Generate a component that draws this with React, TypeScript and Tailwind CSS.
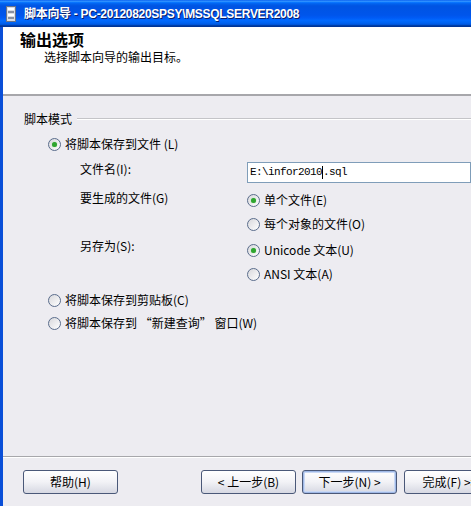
import React from 'react';

const cjk = "font-['SimSun','Noto_Sans_CJK_SC',sans-serif]";

function Radio({ checked }: { checked?: boolean }) {
    return (
        <span className="relative inline-flex w-[13px] h-[13px] shrink-0 rounded-full border border-[#5a6c8c] bg-gradient-to-br from-[#d8d8dc] to-[#ffffff] items-center justify-center">
            {checked && <span className="w-[5px] h-[5px] rounded-full bg-[#2fa52f] shadow-[0_0_1px_#7ad07a]" />}
        </span>
    );
}

function RadioRow({ checked, children }: { checked?: boolean; children: React.ReactNode }) {
    return (
        <div className="flex items-center h-[20px] gap-[4px]">
            <Radio checked={checked} />
            <span className="text-[12px] leading-[14px] text-black whitespace-nowrap">{children}</span>
        </div>
    );
}

function XpButton({ children, isDefault, className }: { children: React.ReactNode; isDefault?: boolean; className?: string }) {
    return (
        <button
            className={`h-[24px] w-[95px] shrink-0 rounded-[3px] border border-[#4a5878] bg-gradient-to-b from-[#ffffff] via-[#f2f2f6] to-[#d6d8e2] text-[12px] text-black whitespace-nowrap ${
                isDefault ? 'shadow-[inset_0_0_0_1px_#9fb8e6,inset_0_0_0_2px_#c9d8f4]' : ''
            } ${className ?? ''}`}
        >
            {children}
        </button>
    );
}

export default function App() {
    return (
        <div className={`w-[471px] h-[506px] overflow-hidden flex flex-col bg-[#edecf1] ${cjk}`}>
            {/* title bar */}
            <div
                className="h-[27px] shrink-0 flex items-center pl-[6px] gap-[8px]"
                style={{
                    background:
                        'linear-gradient(to bottom, #0058EE 0%, #3593FF 4%, #288EFF 6%, #127DFF 8%, #036FFC 10%, #0262EE 14%, #0057E5 20%, #0054E3 24%, #0055EB 56%, #005BF5 66%, #026AFE 76%, #0062EF 86%, #0052D6 92%, #0040AB 94%, #003092 100%)',
                }}
            >
                <svg width="10" height="16" viewBox="0 0 10 16">
                    <rect x="0.5" y="0.5" width="9" height="15" fill="#d8dce4" stroke="#6a7488" />
                    <rect x="2" y="2" width="6" height="2" fill="#ffffff" />
                    <rect x="2" y="5" width="6" height="2" fill="#8890a0" />
                    <rect x="2" y="8" width="6" height="2" fill="#ffffff" />
                    <rect x="2" y="11" width="6" height="2" fill="#8890a0" />
                </svg>
                <span className="text-white font-bold text-[12px] tracking-[-0.3px] font-['Liberation_Sans','Noto_Sans_CJK_SC',sans-serif] [text-shadow:1px_1px_0_#0a1e6a] whitespace-nowrap">
                    脚本向导 - PC-20120820SPSY\MSSQLSERVER2008
                </span>
            </div>

            <div className="flex-1 flex flex-col border-l-[3px] border-[#0a4fd8]">
                {/* header */}
                <div className="h-[69px] shrink-0 bg-white pl-[17px] pt-[5px] border-b-2 border-[#a7a7ab]">
                    <div className="text-[16px] leading-[15px] font-bold text-black">输出选项</div>
                    <div className="text-[12px] leading-[13px] text-black pl-[24px] mt-[3px]">选择脚本向导的输出目标。</div>
                </div>

                {/* body */}
                <div className="flex-1 flex flex-col text-black">
                    <div className="flex items-center h-[16px] mt-[15px] pl-[21px]">
                        <span className="text-[12px] leading-[14px] whitespace-nowrap">脚本模式</span>
                        <div className="flex-1 ml-[5px] border-t border-b border-t-[#c4c4c8] border-b-white" />
                    </div>

                    <div className="mt-[7px] pl-[45px]">
                        <RadioRow checked>将脚本保存到文件 (L)</RadioRow>
                    </div>

                    <div className="pl-[77px] flex flex-col">
                        <div className="flex mt-[8px]">
                            <span className="w-[167px] shrink-0 text-[12px] leading-[14px]">文件名(I):</span>
                            <div className="flex-1 h-[21px] border border-[#7f9db9] bg-white flex items-center pl-[2px] font-['Liberation_Mono',monospace] text-[11px] tracking-[-0.6px] whitespace-nowrap">
                                E:\infor2010
                                <span className="inline-block w-px h-[13px] bg-black" />
                                .sql
                            </div>
                        </div>

                        <div className="flex mt-[7px]">
                            <span className="w-[167px] shrink-0 text-[12px] leading-[16px]">要生成的文件(G)</span>
                            <div className="flex flex-col gap-[4px]">
                                <RadioRow checked>单个文件(E)</RadioRow>
                                <RadioRow>每个对象的文件(O)</RadioRow>
                            </div>
                        </div>

                        <div className="flex mt-[6px]">
                            <span className="w-[167px] shrink-0 text-[12px] leading-[12px]">另存为(S):</span>
                            <div className="flex flex-col gap-[4px]">
                                <RadioRow checked>Unicode 文本(U)</RadioRow>
                                <RadioRow>ANSI 文本(A)</RadioRow>
                            </div>
                        </div>
                    </div>

                    <div className="mt-[6px] pl-[45px] flex flex-col gap-[3px]">
                        <RadioRow>将脚本保存到剪贴板(C)</RadioRow>
                        <RadioRow>将脚本保存到 “新建查询” 窗口(W)</RadioRow>
                    </div>
                </div>

                {/* footer */}
                <div className="h-[50px] shrink-0 border-t border-[#a7a7ab] flex flex-col">
                    <div className="h-px bg-white" />
                    <div className="flex items-center mt-[12px] pl-[20px]">
                        <XpButton>帮助(H)</XpButton>
                        <XpButton className="ml-[83px]">&lt; 上一步(B)</XpButton>
                        <XpButton isDefault className="ml-[6px]">下一步(N) &gt;</XpButton>
                        <XpButton className="ml-[7px]">完成(F) &gt;&gt;|</XpButton>
                    </div>
                </div>
            </div>
        </div>
    );
}
